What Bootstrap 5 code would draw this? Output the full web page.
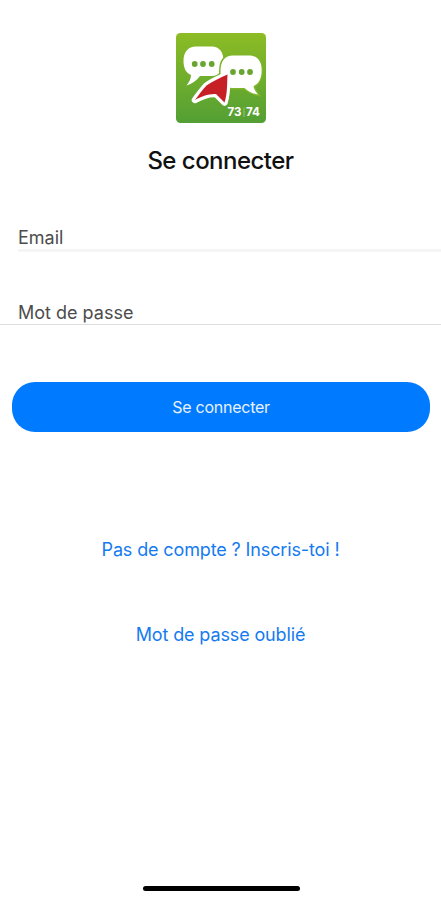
<!DOCTYPE html>
<html lang="fr">
<head>
<meta charset="utf-8">
<meta name="viewport" content="width=device-width, initial-scale=1">
<title>Se connecter</title>
<link href="https://cdn.jsdelivr.net/npm/bootstrap@5.3.0/dist/css/bootstrap.min.css" rel="stylesheet">
<style>
body{font-family:Inter,"Liberation Sans",sans-serif;height:900px;overflow:hidden}
.screen{height:900px;padding-top:33px}
.logo{width:90px;height:90px}
.title{font-size:24px;line-height:30px;margin-top:23px;letter-spacing:-.52px;color:#111}
.field{font-size:18px;line-height:22px;color:#4c4c4c}
.field-email{margin:51px 0 0 18px;height:25px;border-bottom:3px solid #f5f5f5}
.field-pass{margin-top:50px;height:23px;padding-left:18px;border-bottom:1px solid #dedede}
.field .form-control{font-size:inherit;line-height:inherit;height:22px}
.field .form-control::placeholder{color:#4c4c4c;opacity:1}
.login{margin:57px 11px 0 12px;height:50px;border-radius:23px;background:#007aff;color:#e8f2ff;font-size:16px;line-height:24px;letter-spacing:-.25px}
.textlink{font-size:18px;line-height:24px;color:#167bf0;letter-spacing:-.13px}
.signup{margin-top:106px}
.forgot{margin-top:61px}
.homebar{width:157px;height:5px;margin:0 0 9px 1px;background:#000}
</style>
<script src="https://cdn.jsdelivr.net/npm/bootstrap@5.3.0/dist/js/bootstrap.bundle.min.js"></script>
</head>
<body class="bg-white">
<main class="screen d-flex flex-column">
<svg class="logo align-self-center flex-shrink-0" viewBox="0 0 90 90" role="img">
<defs><linearGradient id="g" x1="0" y1="0" x2="0" y2="1"><stop offset="0" stop-color="#8dbc25"/><stop offset="1" stop-color="#539f34"/></linearGradient></defs>
<rect width="90" height="90" rx="4.5" fill="url(#g)"/>
<path fill="#fff" d="M20 13.500H36C43 13.500 47.500 19 47.500 27.500C47.500 37 43 43 36 43H24C20 48 16 51 10.500 52.500C13 49 15 46 15 42C10 40 7.500 35 7.500 28C7.500 19 12 13.500 20 13.500Z"/>
<path fill="#fff" stroke="#7fb529" stroke-width="3" paint-order="stroke" d="M57 22.500H73C81 22.500 85.700 28 85.700 37C85.700 46 82.500 51 77.500 53C78 56 79.500 58.500 82 61.500C76 60.500 72 58.500 68.500 55H57C49 55 44.500 48 44.500 38.500C44.500 28 49 22.500 57 22.500Z"/>
<path fill="#c71f26" stroke="#fff" stroke-width="6.500" stroke-linejoin="round" paint-order="stroke" d="M51.500 41.500C44 45 36.500 48 30.500 52.500C26 57 23 62 19 67C25 63.500 33 60.500 40 61L48.500 69.500C51.500 61 51 50 51.500 41.500Z"/>
<g fill="#68a631"><circle cx="18.700" cy="31" r="2.900"/><circle cx="27" cy="31" r="2.900"/><circle cx="35.700" cy="31" r="2.900"/><circle cx="57" cy="39" r="2.900"/><circle cx="65.700" cy="39" r="2.900"/><circle cx="74" cy="39" r="2.900"/></g>
<g fill="#fff" font-family="Inter,sans-serif" font-weight="700" font-size="12"><text x="51.500" y="83" textLength="14" lengthAdjust="spacingAndGlyphs">73</text><text x="70" y="83" textLength="14" lengthAdjust="spacingAndGlyphs">74</text></g>
<path d="M68 74.500V84" stroke="#a9ce8c" stroke-width=".8"/>
</svg>
<h1 class="title text-center fw-medium mb-0">Se connecter</h1>
<div class="field field-email flex-shrink-0"><input class="form-control border-0 p-0 rounded-0 shadow-none" type="email" placeholder="Email"></div>
<div class="field field-pass flex-shrink-0"><input class="form-control border-0 p-0 rounded-0 shadow-none" type="password" placeholder="Mot de passe"></div>
<button class="login btn border-0 flex-shrink-0">Se connecter</button>
<a class="textlink signup text-decoration-none align-self-center" href="#">Pas de compte ? Inscris-toi !</a>
<a class="textlink forgot text-decoration-none align-self-center" href="#">Mot de passe oublié</a>
<div class="homebar rounded-pill mt-auto align-self-center"></div>
</main>
</body>
</html>
